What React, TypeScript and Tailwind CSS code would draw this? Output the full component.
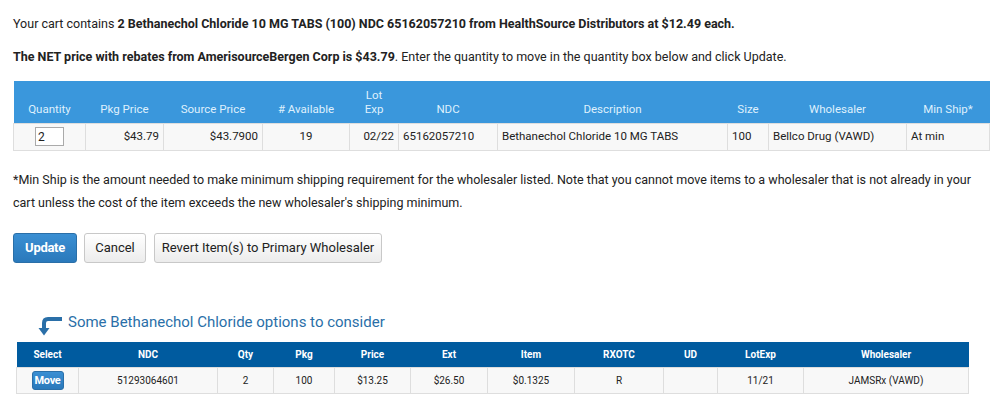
const topCols = [
  { label: "Quantity", w: "w-[72px]" },
  { label: "Pkg Price", w: "w-[78px]" },
  { label: "Source Price", w: "w-[99px]" },
  { label: "# Available", w: "w-[87px]" },
  { label: "Lot Exp", w: "w-[49px]" },
  { label: "NDC", w: "w-[99px]" },
  { label: "Description", w: "w-[230px]" },
  { label: "Size", w: "w-[41px]" },
  { label: "Wholesaler", w: "w-[138px]" },
  { label: "Min Ship*", w: "w-[83px]" },
]

const optCols = [
  { label: "Select", w: "w-[62px]" },
  { label: "NDC", w: "w-[139px]" },
  { label: "Qty", w: "w-[56px]" },
  { label: "Pkg", w: "w-[61px]" },
  { label: "Price", w: "w-[76px]" },
  { label: "Ext", w: "w-[77px]" },
  { label: "Item", w: "w-[87px]" },
  { label: "RXOTC", w: "w-[89px]" },
  { label: "UD", w: "w-[54px]" },
  { label: "LotExp", w: "w-[86px]" },
  { label: "Wholesaler", w: "w-[165px]" },
]

const optRow = ["51293064601", "2", "100", "$13.25", "$26.50", "$0.1325", "R", "", "11/21", "JAMSRx (VAWD)"]

const td = "border border-[#dedede] px-[4px] h-[27px]"

const TurnArrow = () => (
  <svg width="26" height="20" viewBox="0 0 26 20" className="mr-[5px] mt-[6px]">
    <path d="M25 3 H11 Q7 3 7 7 V13" stroke="#2a6fa8" strokeWidth="4" fill="none" />
    <path d="M1.5 12 H12.5 L7 19.5 Z" fill="#2a6fa8" />
  </svg>
)

export default function App() {
  return (
    <div className="min-h-[407px] bg-white pl-[13px] pt-[14px] text-[12.5px] text-[#222] [font-family:Roboto,'Liberation_Sans',sans-serif]">
      <p className="leading-[20px]">
        Your cart contains{" "}
        <b>2 Bethanechol Chloride 10 MG TABS (100) NDC 65162057210 from HealthSource Distributors at $12.49 each.</b>
      </p>
      <p className="mt-[13px] leading-[20px]">
        <b>The NET price with rebates from AmerisourceBergen Corp is $43.79</b>. Enter the quantity to move in the
        quantity box below and click Update.
      </p>

      <table className="mt-[14px] table-fixed border-collapse w-[976px] text-[11.5px]">
        <thead>
          <tr className="bg-[#3a97dc] h-[42px]">
            {topCols.map((c) => (
              <th
                key={c.label}
                className={`${c.w} align-bottom pb-[7px] font-normal text-[#dff0fc] leading-[14px] text-center`}
              >
                {c.label === "Lot Exp" ? (
                  <>
                    Lot
                    <br />
                    Exp
                  </>
                ) : (
                  c.label
                )}
              </th>
            ))}
          </tr>
        </thead>
        <tbody>
          <tr className="bg-[#f8f8f8] text-[#222] h-[27px]">
            <td className={`${td} text-center`}>
              <input
                defaultValue="2"
                className="w-[29px] h-[19px] border border-[#aaa] bg-white px-[2px] text-[12px] text-left align-middle"
              />
            </td>
            <td className={`${td} text-right`}>$43.79</td>
            <td className={`${td} text-right`}>$43.7900</td>
            <td className={`${td} text-center`}>19</td>
            <td className={`${td} text-right`}>02/22</td>
            <td className={`${td} text-left`}>65162057210</td>
            <td className={`${td} text-left`}>Bethanechol Chloride 10 MG TABS</td>
            <td className={`${td} text-left`}>100</td>
            <td className={`${td} text-left`}>Bellco Drug (VAWD)</td>
            <td className={`${td} text-left`}>At min</td>
          </tr>
        </tbody>
      </table>

      <p className="mt-[17px] leading-[23px] pr-[10px]">
        *Min Ship is the amount needed to make minimum shipping requirement for the wholesaler listed. Note that you
        cannot move items to a wholesaler that is not already in your cart unless the cost of the item exceeds the new
        wholesaler's shipping minimum.
      </p>

      <div className="mt-[19px] flex gap-[7px] items-center">
        <button className="h-[30px] w-[64px] rounded-[3px] border border-[#2a6fa8] bg-gradient-to-b from-[#3a8fd3] to-[#2a79bb] text-white font-bold text-[13px] tracking-[-0.3px]">
          Update
        </button>
        <button className="h-[30px] w-[62px] rounded-[3px] border border-[#c8c8c8] bg-gradient-to-b from-white to-[#ececec] text-[#222] text-[13px]">
          Cancel
        </button>
        <button className="ml-[1px] h-[30px] w-[228px] rounded-[3px] border border-[#c8c8c8] bg-gradient-to-b from-white to-[#ececec] text-[#222] text-[13px]">
          Revert Item(s) to Primary Wholesaler
        </button>
      </div>

      <div className="mt-[50px] ml-[24px] flex items-center h-[20px] text-[15px] text-[#2a6fa8]">
        <TurnArrow />
        Some Bethanechol Chloride options to consider
      </div>

      <table className="mt-[9px] ml-[3px] table-fixed border-collapse w-[952px] text-[10px]">
        <thead>
          <tr className="bg-[#005b9f] h-[26px]">
            {optCols.map((c) => (
              <th key={c.label} className={`${c.w} text-white font-bold text-center`}>
                {c.label}
              </th>
            ))}
          </tr>
        </thead>
        <tbody>
          <tr className="bg-[#f8f8f8] text-[#222]">
            <td className="border border-[#dedede] h-[26px] text-center">
              <button className="h-[19px] w-[32px] rounded-[3px] border border-[#2a6fa8] bg-gradient-to-b from-[#3a8fd3] to-[#2a79bb] text-white font-bold text-[11px] leading-none tracking-[-0.3px]">
                Move
              </button>
            </td>
            {optRow.map((v, i) => (
              <td key={i} className="border border-[#dedede] h-[26px] text-center">
                {v}
              </td>
            ))}
          </tr>
        </tbody>
      </table>
    </div>
  )
}
